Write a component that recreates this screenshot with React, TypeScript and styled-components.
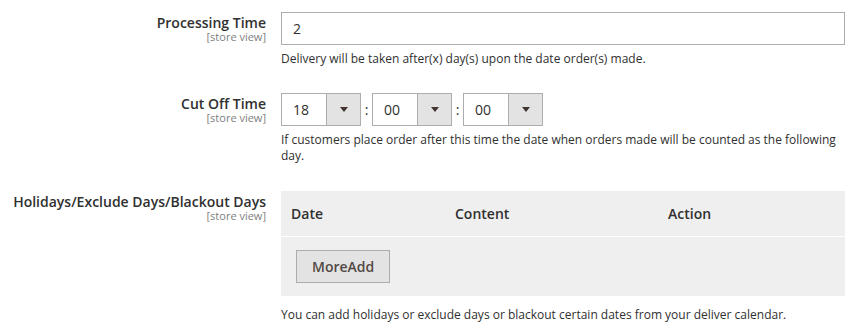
import styled, { createGlobalStyle } from "styled-components";

const GlobalStyle = createGlobalStyle`
	body {
		margin: 0;
		background: #fff;
		font-family: "Open Sans", "Liberation Sans", sans-serif;
		color: #303030;
	}
`;

const Form = styled.div`
	padding-top: 12px;
	width: 845px;
`;

const Field = styled.div`
	display: flex;
	margin-bottom: ${(props: { $gap?: number }) => props.$gap ?? 26}px;
`;

const LabelCol = styled.div`
	width: 266px;
	flex-shrink: 0;
	margin-right: 15px;
	padding-top: 2px;
	text-align: right;
`;

const Label = styled.div`
	font-size: 14px;
	font-weight: 600;
	line-height: 17px;
	color: #303030;
`;

const Scope = styled.div`
	font-size: 11px;
	line-height: 12px;
	color: #808080;
`;

const Control = styled.div`
	flex: 1;
	min-width: 0;
`;

const TextInput = styled.div`
	box-sizing: border-box;
	height: 33px;
	border: 1px solid #adadad;
	padding: 0 11px;
	display: flex;
	align-items: center;
	font-size: 14px;
	color: #303030;
	background: #fff;
`;

const Note = styled.div`
	font-size: 12px;
	line-height: 16px;
	margin-top: 6px;
	color: #303030;
	padding-right: 4px;
`;

const TimeRow = styled.div`
	display: flex;
	align-items: center;
`;

const Select = styled.div`
	box-sizing: border-box;
	width: 80px;
	height: 33px;
	border: 1px solid #adadad;
	display: flex;
	background: #fff;
`;

const SelectValue = styled.div`
	flex: 1;
	display: flex;
	align-items: center;
	padding-left: 11px;
	font-size: 14px;
	color: #303030;
`;

const SelectArrow = styled.div`
	width: 33px;
	background: #e3e3e3;
	border-left: 1px solid #adadad;
	display: flex;
	align-items: center;
	justify-content: center;
`;

const Colon = styled.span`
	width: 11px;
	text-align: center;
	font-size: 14px;
	color: #303030;
`;

const Table = styled.div`
	background: #efefef;
`;

const HeadRow = styled.div`
	display: grid;
	grid-template-columns: 164px 213px 1fr;
	height: 45px;
	align-items: center;
	border-bottom: 1px solid #fff;
	font-size: 14px;
	font-weight: 600;
	color: #303030;
`;

const HeadCell = styled.div`
	padding-left: 10px;
`;

const Body = styled.div`
	padding: 13px 15px;
`;

const Button = styled.button`
	box-sizing: border-box;
	height: 33px;
	padding: 0 15px;
	background: #e3e3e3;
	border: 1px solid #adadad;
	font-family: "Open Sans", "Liberation Sans", sans-serif;
	font-size: 14px;
	font-weight: 600;
	color: #514943;
	cursor: pointer;
`;

const FooterNote = styled(Note)`
	margin-top: 11px;
`;

function Arrow() {
	return (
		<svg width="8" height="5" viewBox="0 0 8 5">
			<path d="M0 0 L8 0 L4 5 Z" fill="#41362f" />
		</svg>
	);
}

function TimeSelect({ value }: { value: string }) {
	return (
		<Select>
			<SelectValue>{value}</SelectValue>
			<SelectArrow>
				<Arrow />
			</SelectArrow>
		</Select>
	);
}

function App() {
	return (
		<>
			<GlobalStyle />
			<Form>
				<Field>
					<LabelCol>
						<Label>Processing Time</Label>
						<Scope>[store view]</Scope>
					</LabelCol>
					<Control>
						<TextInput>2</TextInput>
						<Note>Delivery will be taken after(x) day(s) upon the date order(s) made.</Note>
					</Control>
				</Field>

				<Field $gap={27}>
					<LabelCol>
						<Label>Cut Off Time</Label>
						<Scope>[store view]</Scope>
					</LabelCol>
					<Control>
						<TimeRow>
							<TimeSelect value="18" />
							<Colon>:</Colon>
							<TimeSelect value="00" />
							<Colon>:</Colon>
							<TimeSelect value="00" />
						</TimeRow>
						<Note>
							If customers place order after this time the date when orders made will be counted as the following
							day.
						</Note>
					</Control>
				</Field>

				<Field $gap={0}>
					<LabelCol>
						<Label>Holidays/Exclude Days/Blackout Days</Label>
						<Scope>[store view]</Scope>
					</LabelCol>
					<Control>
						<Table>
							<HeadRow>
								<HeadCell>Date</HeadCell>
								<HeadCell>Content</HeadCell>
								<HeadCell>Action</HeadCell>
							</HeadRow>
							<Body>
								<Button>MoreAdd</Button>
							</Body>
						</Table>
						<FooterNote>You can add holidays or exclude days or blackout certain dates from your deliver calendar.</FooterNote>
					</Control>
				</Field>
			</Form>
		</>
	);
}

export default App;
